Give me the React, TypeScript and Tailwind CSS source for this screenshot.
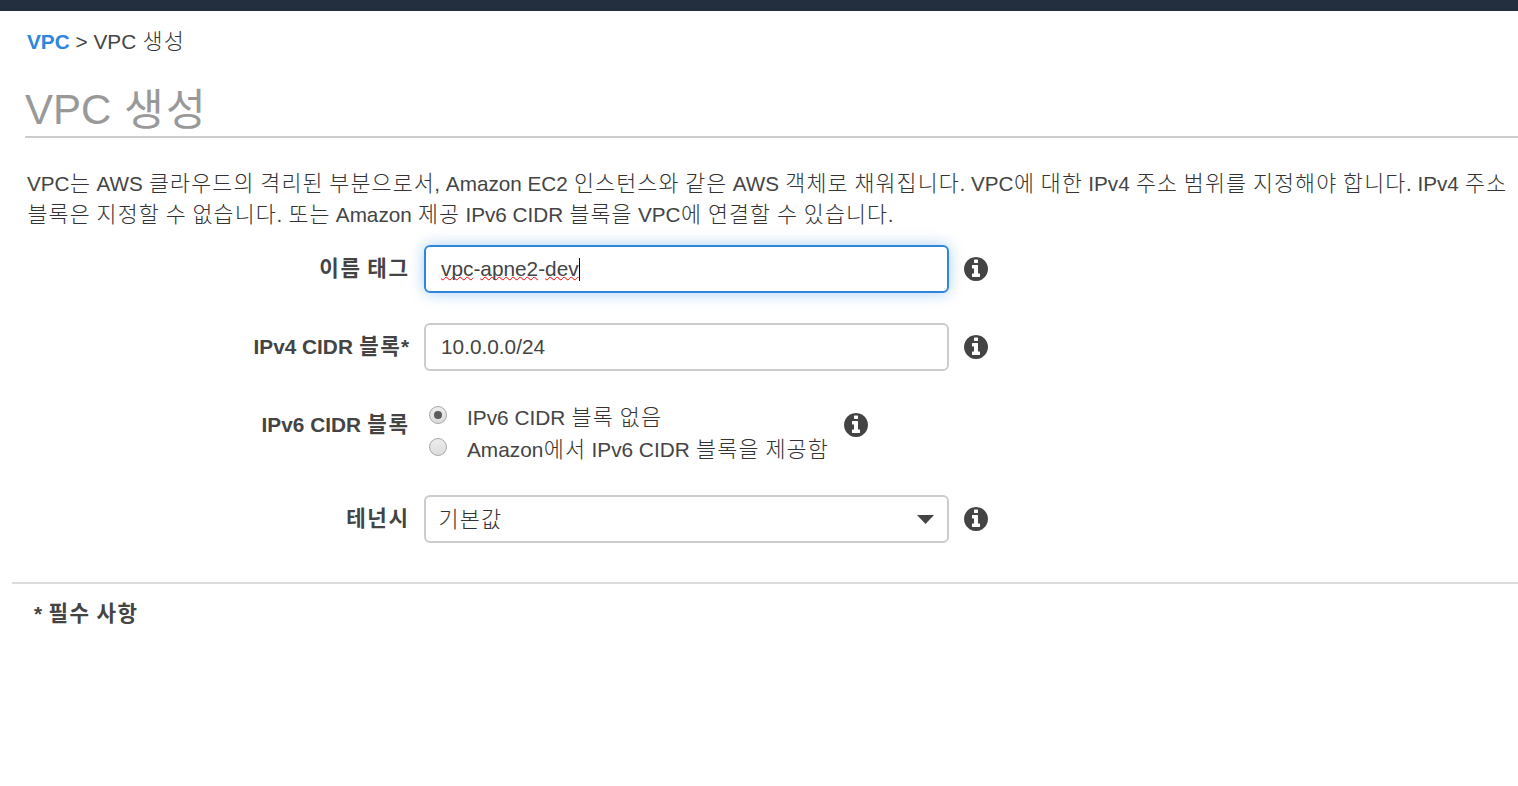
import React from 'react';

/* Sets runs of Hangul in their own lighter, wider-tracked face beside the Latin text. */
function T({ text, bold, big }: { text: string; bold?: boolean; big?: boolean }) {
  const style = big
    ? 'relative top-px text-[1.03em] leading-none ml-[1px] tracking-[2.2px] font-normal'
    : bold
      ? 'text-[1.02em] leading-none ml-[0.5px] mr-[-0.5px] tracking-[1.6px]'
      : 'text-[1.05em] leading-none ml-[0.5px] mr-[-0.5px] tracking-[1.12px] font-light text-[#333]';
  return (
    <>
      {text.split(/([가-힣]+)/).map((part, i) =>
        i % 2 ? (
          <span key={i} className={style}>{part}</span>
        ) : (
          <React.Fragment key={i}>{part}</React.Fragment>
        ),
      )}
    </>
  );
}

function Info() {
  return (
    <svg viewBox="128 128 1536 1536" className="h-6 w-6 shrink-0 fill-[#444]" aria-hidden="true">
      <path d="M1152 1376v-160q0-14-9-23t-23-9h-96v-512q0-14-9-23t-23-9h-320q-14 0-23 9t-9 23v160q0 14 9 23t23 9h96v320h-96q-14 0-23 9t-9 23v160q0 14 9 23t23 9h448q14 0 23-9t9-23zm-128-896v-160q0-14-9-23t-23-9h-192q-14 0-23 9t-9 23v160q0 14 9 23t23 9h192q14 0 23-9t9-23zm640 416q0 209-103 385.5t-279.5 279.5-385.5 103-385.5-103-279.5-279.5-103-385.5 103-385.5 279.5-279.5 385.5-103 385.5 103 279.5 279.5 103 385.5z" />
    </svg>
  );
}

function Radio({ checked, label }: { checked?: boolean; label: string }) {
  return (
    <div className="flex h-8">
      <span className="mt-[5px] ml-[5px] flex h-[18px] w-[18px] shrink-0 items-center justify-center rounded-full border border-[#a8a8a8] bg-linear-to-b from-[#ededed] to-[#dcdcdc]">
        {checked && <span className="h-2 w-2 rounded-full bg-[#5c5c5c]" />}
      </span>
      <span className="ml-5 pt-px leading-8 whitespace-pre"><T text={label} /></span>
    </div>
  );
}

function Row({ label, className, children }: { label: string; className: string; children: React.ReactNode }) {
  return (
    <div className={`flex items-center ${className}`}>
      <div className="w-[409px] shrink-0 text-right font-bold whitespace-pre"><T text={label} bold /></div>
      {children}
    </div>
  );
}

function Misspelled({ children }: { children: string }) {
  return (
    <span className="underline decoration-[#f00] decoration-wavy decoration-[1.1px] underline-offset-0 [text-decoration-skip-ink:none]">
      {children}
    </span>
  );
}

export default function App() {
  return (
    <div className="h-[786px] w-full overflow-hidden bg-white font-['Liberation_Sans','Noto_Sans_CJK_KR',sans-serif] text-[20.8px] text-[#444]">
      <div className="h-[11px] bg-[#232f3e]" />
      <nav className="h-[61px] pl-[27px] leading-[62px] whitespace-pre">
        <b className="text-[#2e86de]">VPC</b>
        <T text=" > VPC 생성" />
      </nav>
      <h1 className="ml-[25px] h-[66px] border-b-2 border-[#ccc] text-[42px] leading-[76px] text-[#999]">
        <T text="VPC 생성" big />
      </h1>
      <div className="mt-[30px] ml-[27px] text-[20.7px] leading-[31px] whitespace-nowrap">
        <p><T text="VPC는 AWS 클라우드의 격리된 부분으로서, Amazon EC2 인스턴스와 같은 AWS 객체로 채워집니다. VPC에 대한 IPv4 주소 범위를 지정해야 합니다. IPv4 주소" /></p>
        <p><T text="블록은 지정할 수 없습니다. 또는 Amazon 제공 IPv6 CIDR 블록을 VPC에 연결할 수 있습니다." /></p>
      </div>
      <form className="mt-[15px]">
        <Row label="이름 태그" className="h-12">
          <div className="mx-[15px] flex h-12 w-[525px] items-center rounded-[6px] border-2 border-[#2e86de] pl-[15px] shadow-[0_0_15px_rgba(46,134,222,0.4)]">
            <Misspelled>vpc</Misspelled>-<Misspelled>apne2</Misspelled>-<Misspelled>dev</Misspelled>
            <span className="h-[23px] w-px bg-black" />
          </div>
          <Info />
        </Row>
        <Row label="IPv4 CIDR 블록*" className="mt-[30px] h-12">
          <div className="mx-[15px] flex h-12 w-[525px] items-center rounded-[6px] border-2 border-[#ccc] pl-[15px]">10.0.0.0/24</div>
          <Info />
        </Row>
        <Row label="IPv6 CIDR 블록" className="mt-[30px] h-12">
          <div className="ml-[15px] w-[420px] pt-4">
            <Radio checked label="IPv6 CIDR 블록 없음" />
            <Radio label="Amazon에서 IPv6 CIDR 블록을 제공함" />
          </div>
          <Info />
        </Row>
        <Row label="테넌시" className="mt-[46px] h-12">
          <div className="mx-[15px] flex h-12 w-[525px] items-center justify-between rounded-[6px] border-2 border-[#ccc] pr-[13px] pl-3">
            <span className="pt-[2px] whitespace-nowrap"><T text="기본값" /></span>
            <svg viewBox="0 0 17 9" className="mt-px h-[9px] w-[17px] fill-[#444]"><path d="M0 0h17L8.5 9z" /></svg>
          </div>
          <Info />
        </Row>
      </form>
      <footer className="mt-[39px] ml-3 border-t-2 border-[#ddd] pl-[22px] leading-[60px] font-bold"><T text="* 필수 사항" bold /></footer>
    </div>
  );
}
